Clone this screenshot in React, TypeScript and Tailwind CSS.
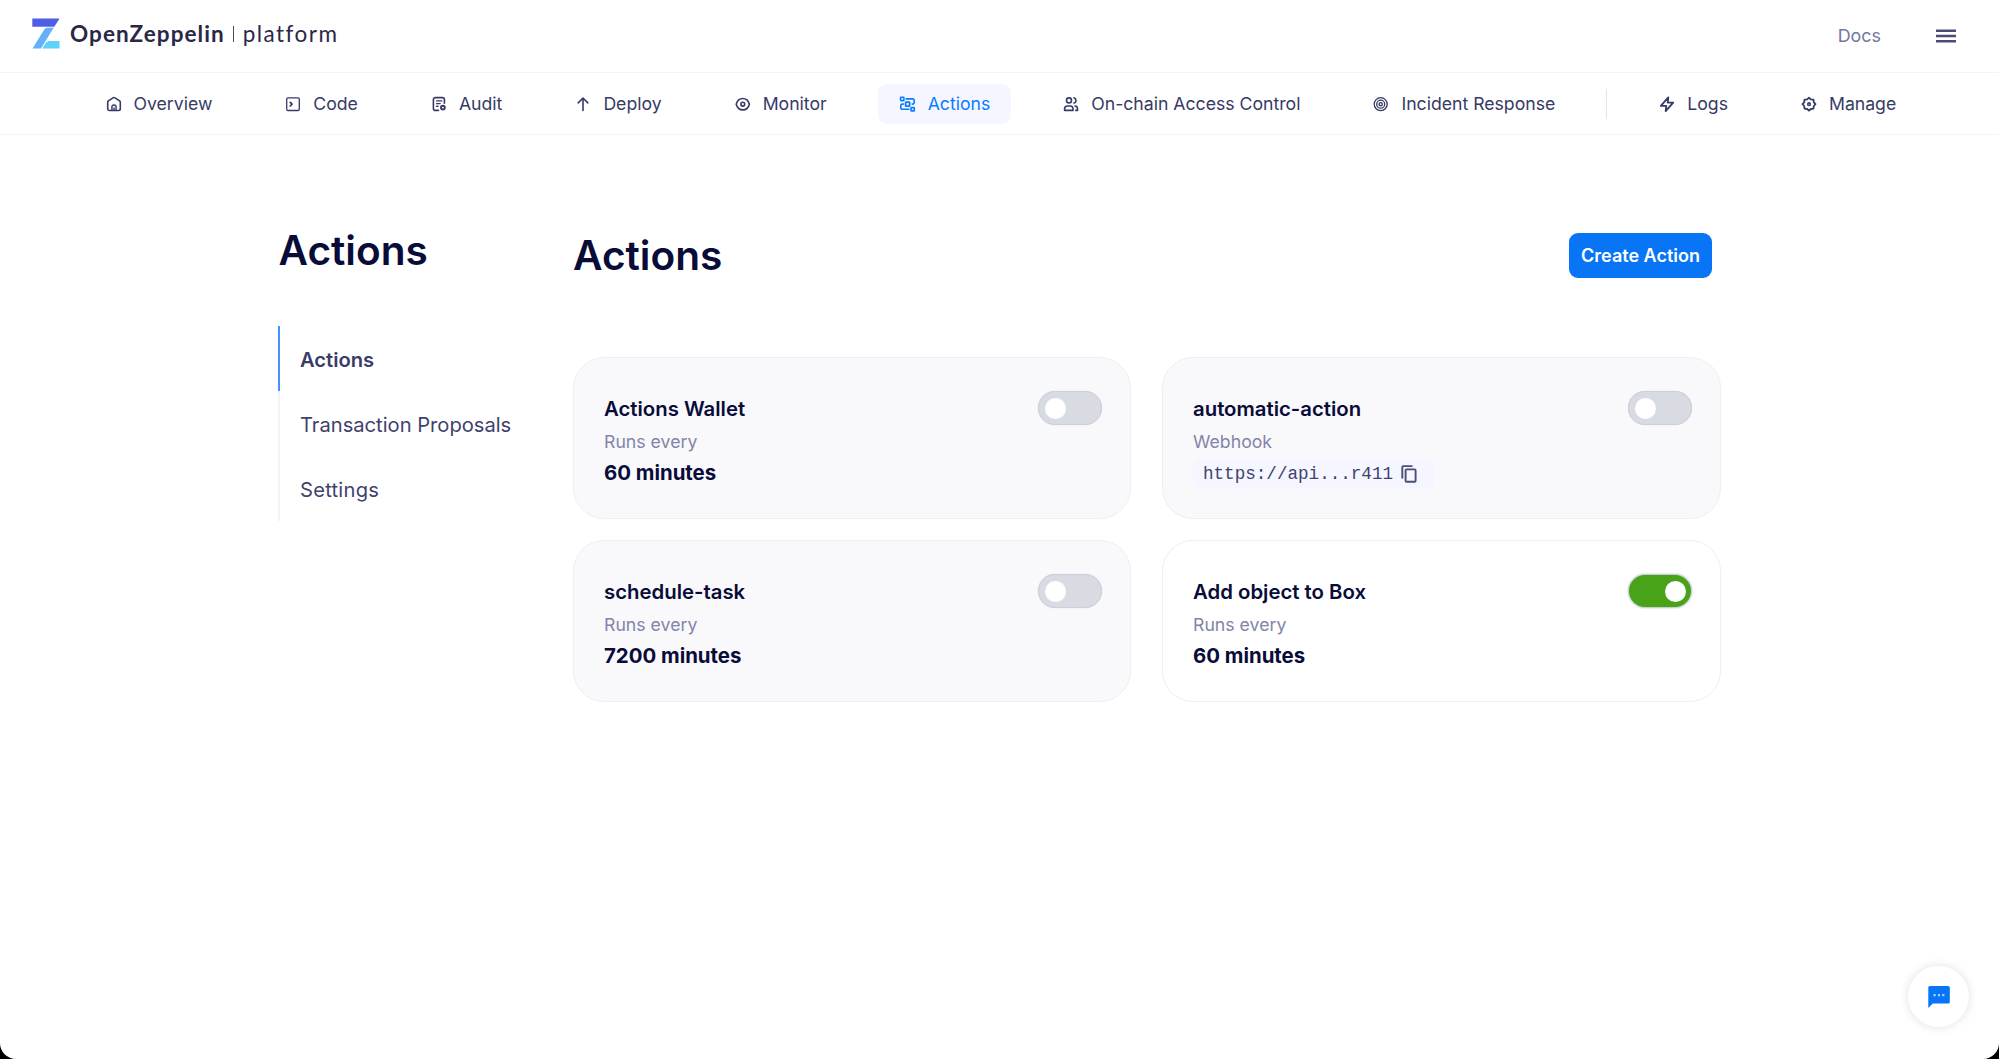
import type { ReactNode } from "react";

function Glyph({ children }: { children: ReactNode }) {
  return (
    <svg
      className="size-[18px] shrink-0"
      viewBox="0 0 18 18"
      fill="none"
      stroke="currentColor"
      strokeWidth="1.6"
      strokeLinecap="round"
      strokeLinejoin="round"
    >
      {children}
    </svg>
  );
}

const icons = {
  overview: (
    <Glyph>
      <path d="M2.700 7.200v6.600a1.700 1.700 0 0 0 1.700 1.700h9.200a1.700 1.700 0 0 0 1.700-1.700V7.200c0-.6-.3-1-.7-1.300L10 2.900a1.700 1.700 0 0 0-2 0L3.400 5.900c-.4.3-.7.700-.7 1.300Z" />
      <path d="M6.900 15.300v-3.200a2.100 2.100 0 0 1 4.200 0v3.200M9 13v2.300" strokeWidth="1.400" />
    </Glyph>
  ),
  code: (
    <Glyph>
      <rect x="2.700" y="2.900" width="12.600" height="12.600" rx="1.200" strokeWidth="1.300" />
      <path d="M6.200 7.400l1.900 1.800-1.900 1.800" strokeWidth="1.700" />
    </Glyph>
  ),
  audit: (
    <Glyph>
      <path d="M8.500 15.400H5.400a2 2 0 0 1-2-2V4.600a2 2 0 0 1 2-2h7a2 2 0 0 1 2 2v3.600" />
      <path d="M6.600 5.900h5.200M6.600 8.600h3.600M6.600 11.300h1.400" strokeWidth="1.400" />
      <circle cx="12.900" cy="12.600" r="1.900" strokeWidth="1.900" />
    </Glyph>
  ),
  deploy: (
    <Glyph>
      <path d="M9 15.500V3.200M4.200 7.900 9 3l4.800 4.900" />
    </Glyph>
  ),
  monitor: (
    <Glyph>
      <path d="M2.200 9.200C3.100 6 5.800 3.500 8.800 3.500s5.700 2.500 6.600 5.700c-.9 3.200-3.600 5.700-6.600 5.700S3.100 12.400 2.200 9.200Z" />
      <circle cx="8.800" cy="9.200" r="1.900" />
    </Glyph>
  ),
  actions: (
    <Glyph>
      <rect x="1.600" y="2.300" width="3.300" height="3.300" rx=".5" />
      <rect x="12" y="12.600" width="3.300" height="3.300" rx=".5" />
      <rect x="6.600" y="7.200" width="4" height="4" rx=".5" strokeWidth="1.800" />
      <path d="M7.200 3.900h6.500a1.500 1.500 0 0 1 1.500 1.500v2.200a1.500 1.500 0 0 1-1.500 1.500h-.5M9.900 14.300H3.300a1.500 1.500 0 0 1-1.500-1.500V10.600a1.500 1.500 0 0 1 1.500-1.500h1" />
    </Glyph>
  ),
  access: (
    <Glyph>
      <circle cx="7" cy="5.400" r="2.500" />
      <path d="M2.600 15.400v-1.700c0-1.700 1.200-2.700 2.900-2.700h2.600c1.700 0 2.900 1 2.900 2.700v1.700Z" />
      <path d="M12 2.800a2.700 2.700 0 0 1 0 5.200M13 11c1.600.2 2.500 1.200 2.500 2.700v1.700h-1.700" />
    </Glyph>
  ),
  incident: (
    <Glyph>
      <circle cx="8.700" cy="9.200" r="6.500" strokeWidth="1.300" />
      <circle cx="8.700" cy="9.200" r="4" strokeWidth="1.300" />
      <circle cx="8.700" cy="9.200" r="1.600" strokeWidth="1.400" />
    </Glyph>
  ),
  logs: (
    <Glyph>
      <path d="M10.300 2.300 2.800 10.800h5.500l-.6 5.300 7.500-8.500H9.700l.6-5.300Z" strokeWidth="1.800" />
    </Glyph>
  ),
  manage: (
    <Glyph>
      <path
        d="M9 2.700 10.800 4.400 13.500 4.700 13.800 7.400 15.500 9.200 13.800 11 13.500 13.700 10.800 14 9 15.700 7.200 14 4.500 13.700 4.200 11 2.500 9.200 4.200 7.400 4.500 4.700 7.200 4.400Z"
        strokeWidth="1.800"
      />
      <circle cx="9" cy="9.200" r="1.300" strokeWidth="1.600" />
    </Glyph>
  ),
};

const mainTabs: { label: string; icon: ReactNode; active?: boolean }[] = [
  { label: "Overview", icon: icons.overview },
  { label: "Code", icon: icons.code },
  { label: "Audit", icon: icons.audit },
  { label: "Deploy", icon: icons.deploy },
  { label: "Monitor", icon: icons.monitor },
  { label: "Actions", icon: icons.actions, active: true },
  { label: "On-chain Access Control", icon: icons.access },
  { label: "Incident Response", icon: icons.incident },
];

const sideTabs = [
  { label: "Logs", icon: icons.logs },
  { label: "Manage", icon: icons.manage },
];

function NavTab({ label, icon, active }: { label: string; icon: ReactNode; active?: boolean }) {
  return (
    <a
      className={`flex h-10 items-center gap-[11px] rounded-[9px] px-[21px] text-[17.650px] whitespace-nowrap ${
        active ? "bg-[#f5f6ff] text-[#0a7cff]" : "text-[#373a65]"
      }`}
    >
      {icon}
      <span className="pt-px">{label}</span>
    </a>
  );
}

function Logo() {
  return (
    <div className="flex items-center text-[#2a2847]">
      <svg className="h-[31px] w-[28px] shrink-0" viewBox="0 0 28 31">
        <path d="M.3.500H27.500L22.300 8.700H.3Z" fill="#4f5fe3" />
        <path d="M15.500 9.700H21.700L8.900 30.500H.5L11.300 12.900C12.600 10.800 13.500 9.700 15.500 9.700Z" fill="#63b0fb" />
        <path d="M10.300 30.500 13.300 25.600C14.500 23.700 15.600 22.900 17.700 22.900H27.500V30.500Z" fill="#5fd2fa" />
      </svg>
      <span className="ml-[10px] font-['Lato',sans-serif] text-[22.500px] leading-[30px] font-bold tracking-[1.060px]">
        OpenZeppelin
      </span>
      <span className="ml-[8px] h-4 w-[1.500px] bg-[#4b4a65]" />
      <span className="ml-[8.500px] font-['Lato',sans-serif] text-[22.500px] leading-[30px] tracking-[1.450px]">
        platform
      </span>
    </div>
  );
}

function Toggle({ on }: { on?: boolean }) {
  return on ? (
    <span className="mt-[-1px] mr-px flex h-8 w-[62px] items-center justify-end rounded-full bg-[#48a318] pr-[5px] shadow-[0_0_2px_1px_#b9bcc8]">
      <span className="size-[21px] rounded-full bg-white" />
    </span>
  ) : (
    <span className="mt-[-2px] flex h-[34px] w-[64px] items-center rounded-full border-[1.500px] border-[#cdcfdb] bg-[#d9dbe3] pl-[6px] shadow-[0_0_1px_#c9cbd6]">
      <span className="size-[21px] rounded-full bg-white" />
    </span>
  );
}

function CopyIcon() {
  return (
    <svg className="h-[18px] w-[16px]" viewBox="0 0 16 18" fill="none" stroke="#4a4d78" strokeWidth="1.900">
      <rect x="4.600" y="4.400" width="10" height="12.300" rx="1" />
      <path d="M1.300 13.600V2.200a1.100 1.100 0 0 1 1.100-1.100H11.500" />
    </svg>
  );
}

type Action = { name: string; kind: string; value?: string; hook?: string; on?: boolean };

const actions: Action[] = [
  { name: "Actions Wallet", kind: "Runs every", value: "60 minutes" },
  { name: "automatic-action", kind: "Webhook", hook: "https://api...r411" },
  { name: "schedule-task", kind: "Runs every", value: "7200 minutes" },
  { name: "Add object to Box", kind: "Runs every", value: "60 minutes", on: true },
];

function ActionCard({ name, kind, value, hook, on }: Action) {
  return (
    <article
      className={`flex h-[162px] justify-between rounded-[31px] border border-[#eeeff3] pt-[35px] pr-[28px] pl-[30px] ${
        on ? "bg-white" : "bg-[#f9f9fc]"
      }`}
    >
      <div className="flex flex-col items-start">
        <h2 className="text-[20.350px] leading-[32px] font-semibold text-[#090c38]">{name}</h2>
        <p className="mt-px text-[17.700px] leading-[32px] text-[#8185a8]">{kind}</p>
        {hook ? (
          <span className="flex h-[31px] w-[241px] items-center gap-[8px] rounded-md bg-[#f5f6ff] pl-[10px] font-['Liberation_Mono',monospace] text-[17.600px] text-[#3f426d]">
            <span className="pt-[2px]">{hook}</span>
            <CopyIcon />
          </span>
        ) : (
          <p className="mt-[-1px] text-[20.400px] leading-[32px] font-bold text-[#090c38]">{value}</p>
        )}
      </div>
      <Toggle on={on} />
    </article>
  );
}

export default function App() {
  return (
    <div className="h-[1059px] overflow-hidden bg-black">
      <div className="relative h-[1059px] rounded-b-[16px] bg-white font-['Inter',sans-serif]">
        <header className="flex h-[73px] items-start justify-between border-b border-[#f4f4f7] pt-[18px] pr-[43px] pl-[32px]">
          <Logo />
          <div className="flex items-center pt-[3px]">
            <a className="text-[17.900px] leading-[30px] text-[#7477a0]">Docs</a>
            <svg className="ml-[55px] h-[14px] w-[20px]" viewBox="0 0 20 14" fill="#4a4c76">
              <path d="M0 .500H20V3H0ZM0 5.700H20V8.200H0ZM0 10.900H20V13.400H0Z" />
            </svg>
          </div>
        </header>

        <nav className="flex h-[62px] items-center gap-[30px] border-b border-[#f4f4f7] pl-[83.500px]">
          {mainTabs.map((tab) => (
            <NavTab key={tab.label} {...tab} />
          ))}
          <span className="h-[30px] w-px bg-[#e3e4ee]" />
          {sideTabs.map((tab) => (
            <NavTab key={tab.label} {...tab} />
          ))}
        </nav>

        <main className="flex pl-[278px]">
          <aside className="w-[295px] pt-[91px]">
            <h1 className="pl-[0.500px] text-[40.600px] leading-[50px] font-semibold text-[#090c38]">Actions</h1>
            <ul className="mt-[50px] text-[20.150px] text-[#3f426d]">
              <li className="h-[65px] border-l-2 border-[#4294fb] pl-[20px] leading-[67px] font-semibold text-[#393c66]">
                Actions
              </li>
              <li className="h-[65px] border-l-2 border-[#f4f4f7] pl-[20px] leading-[67px]">Transaction Proposals</li>
              <li className="h-[65px] border-l-2 border-[#f4f4f7] pl-[20px] leading-[67px] tracking-[0.250px]">
                Settings
              </li>
            </ul>
          </aside>

          <section className="w-[1148px] pt-[96px]">
            <div className="flex items-start justify-between pr-[9px]">
              <h1 className="text-[40.600px] leading-[50px] font-semibold text-[#090c38]">Actions</h1>
              <button className="mt-[2px] h-[45px] w-[143px] rounded-[9px] bg-[#0775f5] text-[18px] font-semibold text-white">
                Create Action
              </button>
            </div>
            <div className="mt-[76px] grid grid-cols-[558px_559px] gap-x-[31px] gap-y-[21px]">
              {actions.map((action) => (
                <ActionCard key={action.name} {...action} />
              ))}
            </div>
          </section>
        </main>

        <button className="absolute right-[30px] bottom-[32px] flex size-[61px] items-center justify-center rounded-full bg-white shadow-[0_0_10px_rgba(60,60,110,0.16)]">
          <svg className="h-[22px] w-[22px]" viewBox="0 0 22 22">
            <path d="M1.800 0H20.200A1.600 1.600 0 0 1 21.800 1.600V15.900A1.600 1.600 0 0 1 20.200 17.500H4.700L.3 22V1.600A1.600 1.600 0 0 1 1.800 0Z" fill="#0775f5" />
            <path d="M5.500 8h2.200v2.200H5.500ZM9.900 8h2.200v2.200H9.900ZM14.200 8h2.200v2.200H14.200Z" fill="#a9d0ff" />
          </svg>
        </button>
      </div>
    </div>
  );
}
